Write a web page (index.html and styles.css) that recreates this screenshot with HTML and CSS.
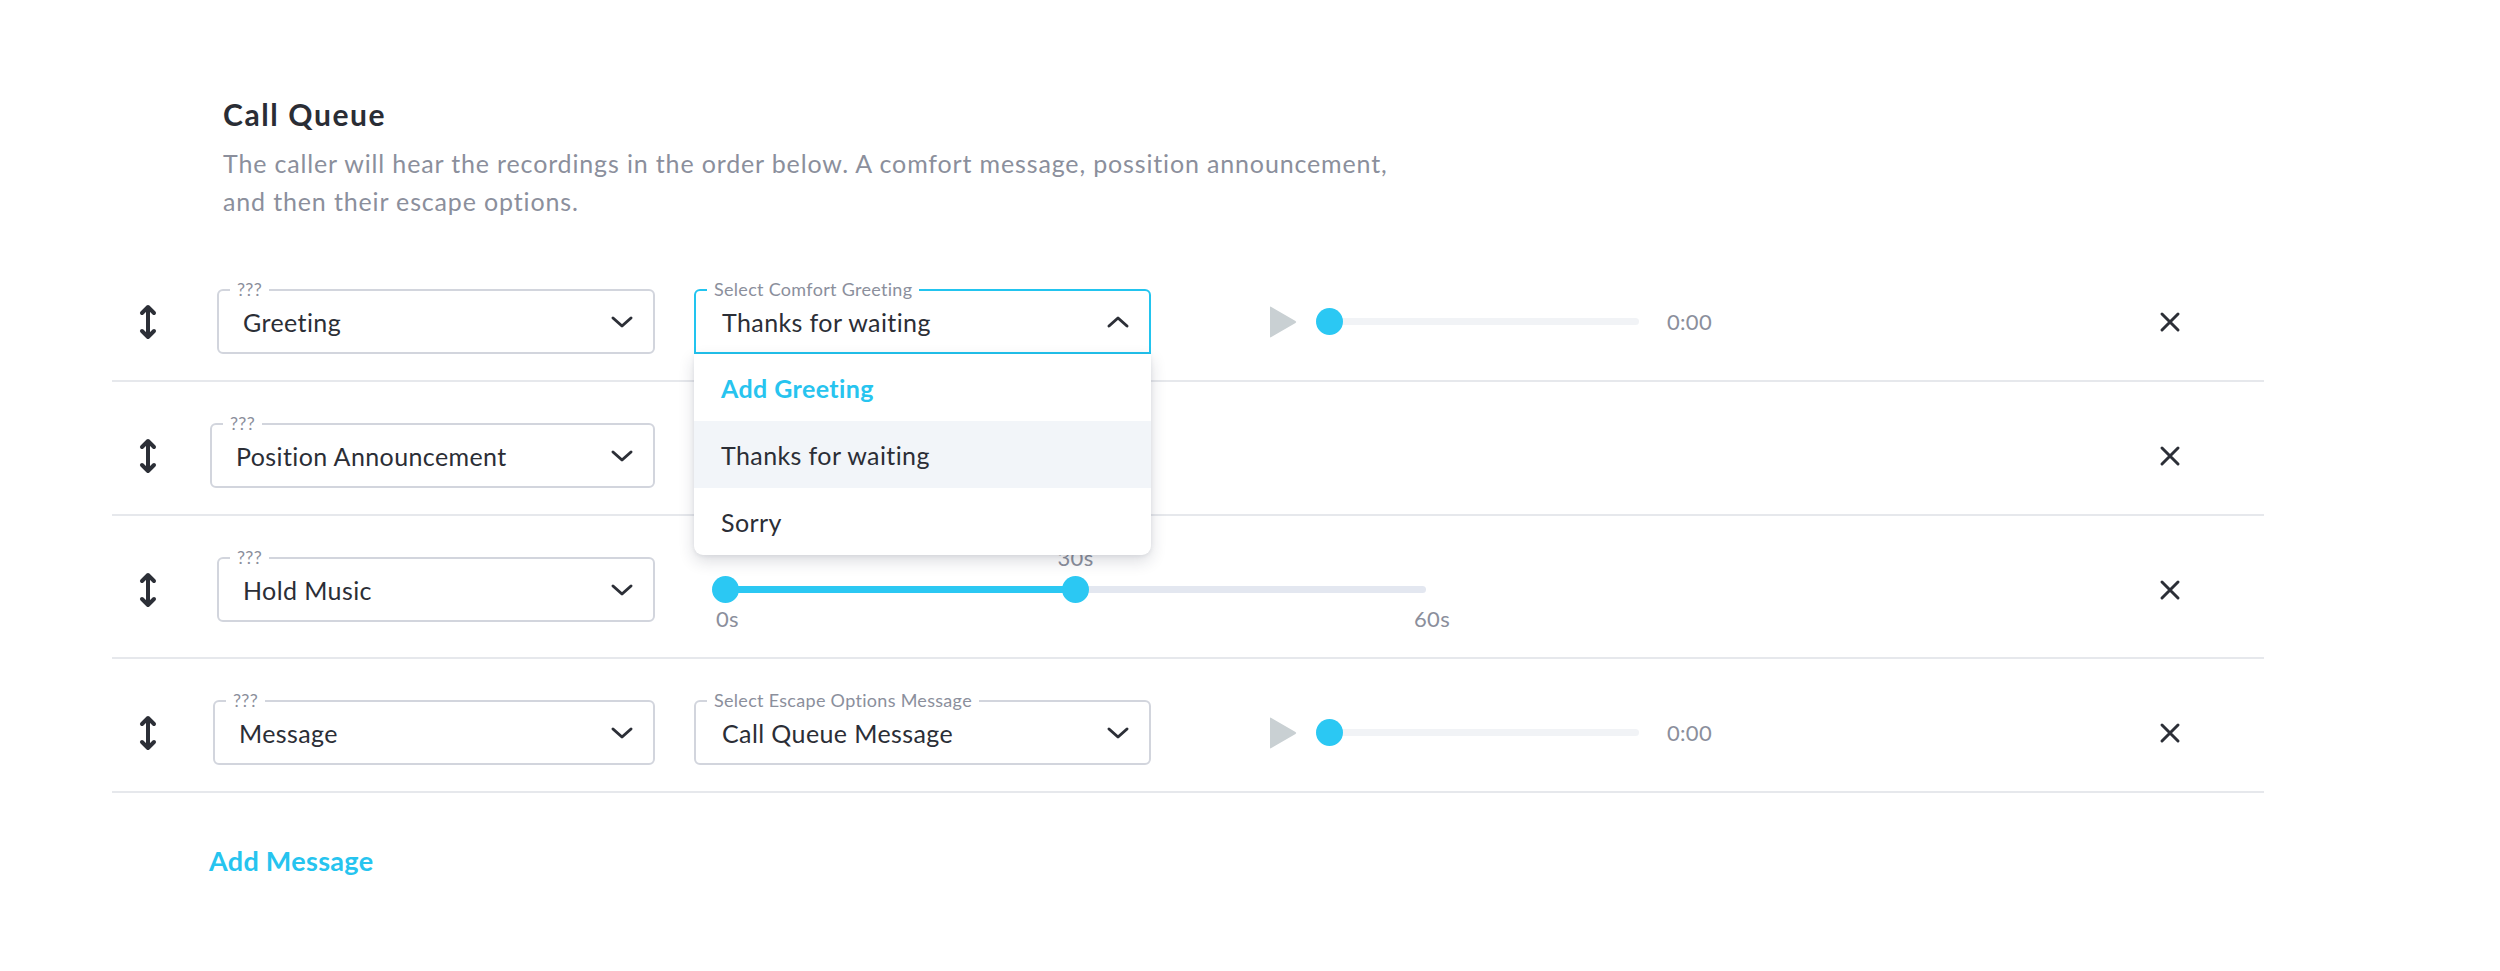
FILE: index.html
```html
<!DOCTYPE html>
<html lang="en">
<head>
<meta charset="utf-8">
<title>Call Queue</title>
<link rel="stylesheet" href="styles.css">
</head>
<body>
<div class="page">
  <header class="intro">
    <h1 class="title">Call Queue</h1>
    <p class="lede">The caller will hear the recordings in the order below. A comfort message, possition announcement, and then their escape options.</p>
  </header>

  <div class="queue">
    <!-- Row 1 -->
    <div class="row row--first">
      <div class="drag">
        <svg width="20" height="38" viewBox="0 0 20 38"><path d="M10 4 V34 M4 10 L10 4 L16 10 M4 28 L10 34 L16 28" fill="none" stroke="#2c2f37" stroke-width="4" stroke-linecap="round" stroke-linejoin="round"/></svg>
      </div>
      <div class="slot">
        <div class="select">
          <span class="select-label">???</span>
          <span class="select-value">Greeting</span>
          <svg class="chev" width="24" height="14" viewBox="0 0 24 14"><path d="M3 3 L12 11 L21 3" fill="none" stroke="#2c2f37" stroke-width="3" stroke-linecap="round" stroke-linejoin="round"/></svg>
        </div>
      </div>
      <div class="select select--msg select--open">
        <span class="select-label">Select Comfort Greeting</span>
        <span class="select-value">Thanks for waiting</span>
        <svg class="chev" width="24" height="14" viewBox="0 0 24 14"><path d="M3 11 L12 3 L21 11" fill="none" stroke="#2c2f37" stroke-width="3" stroke-linecap="round" stroke-linejoin="round"/></svg>
        <ul class="menu">
          <li class="menu-item menu-item--add">Add Greeting</li>
          <li class="menu-item menu-item--active">Thanks for waiting</li>
          <li class="menu-item">Sorry</li>
        </ul>
      </div>
      <div class="player">
        <svg class="play" width="28" height="32" viewBox="0 0 28 32"><path d="M1 1.5 Q1 0 2.3 0.9 L26.5 15 Q28 16 26.5 17 L2.3 31.1 Q1 32 1 30.5 Z" fill="#c9d0d3"/></svg>
        <div class="seek">
          <span class="seek-rail"></span>
          <span class="thumb"></span>
        </div>
        <span class="time">0:00</span>
      </div>
      <button class="remove" type="button" aria-label="Remove">
        <svg width="22" height="22" viewBox="0 0 22 22"><path d="M3 3 L19 19 M19 3 L3 19" stroke="#2c2f37" stroke-width="3" stroke-linecap="round"/></svg>
      </button>
    </div>

    <!-- Row 2 -->
    <div class="row">
      <div class="drag">
        <svg width="20" height="38" viewBox="0 0 20 38"><path d="M10 4 V34 M4 10 L10 4 L16 10 M4 28 L10 34 L16 28" fill="none" stroke="#2c2f37" stroke-width="4" stroke-linecap="round" stroke-linejoin="round"/></svg>
      </div>
      <div class="slot">
        <div class="select select--wide">
          <span class="select-label">???</span>
          <span class="select-value">Position Announcement</span>
          <svg class="chev" width="24" height="14" viewBox="0 0 24 14"><path d="M3 3 L12 11 L21 3" fill="none" stroke="#2c2f37" stroke-width="3" stroke-linecap="round" stroke-linejoin="round"/></svg>
        </div>
      </div>
      <button class="remove" type="button" aria-label="Remove">
        <svg width="22" height="22" viewBox="0 0 22 22"><path d="M3 3 L19 19 M19 3 L3 19" stroke="#2c2f37" stroke-width="3" stroke-linecap="round"/></svg>
      </button>
    </div>

    <!-- Row 3 -->
    <div class="row row--range">
      <div class="drag">
        <svg width="20" height="38" viewBox="0 0 20 38"><path d="M10 4 V34 M4 10 L10 4 L16 10 M4 28 L10 34 L16 28" fill="none" stroke="#2c2f37" stroke-width="4" stroke-linecap="round" stroke-linejoin="round"/></svg>
      </div>
      <div class="slot">
        <div class="select">
          <span class="select-label">???</span>
          <span class="select-value">Hold Music</span>
          <svg class="chev" width="24" height="14" viewBox="0 0 24 14"><path d="M3 3 L12 11 L21 3" fill="none" stroke="#2c2f37" stroke-width="3" stroke-linecap="round" stroke-linejoin="round"/></svg>
        </div>
      </div>
      <div class="range">
        <div class="range-bar">
          <span class="range-rail"></span>
          <span class="range-fill" style="width: 50%"></span>
          <span class="thumb range-thumb" style="left: 0%"></span>
          <span class="thumb range-thumb" style="left: 50%"></span>
          <span class="range-value" style="left: 50%">30s</span>
        </div>
        <div class="range-scale"><span>0s</span><span>60s</span></div>
      </div>
      <button class="remove" type="button" aria-label="Remove">
        <svg width="22" height="22" viewBox="0 0 22 22"><path d="M3 3 L19 19 M19 3 L3 19" stroke="#2c2f37" stroke-width="3" stroke-linecap="round"/></svg>
      </button>
    </div>

    <!-- Row 4 -->
    <div class="row">
      <div class="drag">
        <svg width="20" height="38" viewBox="0 0 20 38"><path d="M10 4 V34 M4 10 L10 4 L16 10 M4 28 L10 34 L16 28" fill="none" stroke="#2c2f37" stroke-width="4" stroke-linecap="round" stroke-linejoin="round"/></svg>
      </div>
      <div class="slot">
        <div class="select select--mid">
          <span class="select-label">???</span>
          <span class="select-value">Message</span>
          <svg class="chev" width="24" height="14" viewBox="0 0 24 14"><path d="M3 3 L12 11 L21 3" fill="none" stroke="#2c2f37" stroke-width="3" stroke-linecap="round" stroke-linejoin="round"/></svg>
        </div>
      </div>
      <div class="select select--msg">
        <span class="select-label">Select Escape Options Message</span>
        <span class="select-value">Call Queue Message</span>
        <svg class="chev" width="24" height="14" viewBox="0 0 24 14"><path d="M3 3 L12 11 L21 3" fill="none" stroke="#2c2f37" stroke-width="3" stroke-linecap="round" stroke-linejoin="round"/></svg>
      </div>
      <div class="player">
        <svg class="play" width="28" height="32" viewBox="0 0 28 32"><path d="M1 1.5 Q1 0 2.3 0.9 L26.5 15 Q28 16 26.5 17 L2.3 31.1 Q1 32 1 30.5 Z" fill="#c9d0d3"/></svg>
        <div class="seek">
          <span class="seek-rail"></span>
          <span class="thumb"></span>
        </div>
        <span class="time">0:00</span>
      </div>
      <button class="remove" type="button" aria-label="Remove">
        <svg width="22" height="22" viewBox="0 0 22 22"><path d="M3 3 L19 19 M19 3 L3 19" stroke="#2c2f37" stroke-width="3" stroke-linecap="round"/></svg>
      </button>
    </div>
  </div>

  <a class="add-link" href="#">Add Message</a>
</div>
</body>
</html>
```

FILE: styles.css
```css
* { box-sizing: border-box; }

html, body {
  margin: 0;
  padding: 0;
  background: #ffffff;
}

body {
  font-family: "Lato", "Liberation Sans", sans-serif;
  color: #2b2e36;
}

.page {
  padding-top: 96px;
}

.intro {
  padding-left: 223px;
}

.title {
  margin: 0;
  font-size: 30px;
  line-height: 36px;
  font-weight: 700;
  letter-spacing: 1.6px;
  color: #2a2d35;
}

.lede {
  margin: 12px 0 0;
  max-width: 1200px;
  font-size: 25px;
  line-height: 38px;
  letter-spacing: 0.85px;
  color: #8b8f9c;
}

.queue {
  margin: 27px 0 0 112px;
  width: 2152px;
}

.row {
  display: flex;
  align-items: flex-start;
  padding: 41px 0 26px;
  border-bottom: 2px solid #e6e8ec;
}

.row--first {
  padding-top: 42px;
}

.row--range {
  padding-bottom: 28px;
}

.drag {
  width: 72px;
  height: 65px;
  display: flex;
  align-items: center;
  justify-content: center;
}

.slot {
  width: 471px;
  display: flex;
  justify-content: flex-end;
}

.select {
  position: relative;
  display: flex;
  align-items: center;
  width: 438px;
  height: 65px;
  padding: 0 19px 0 24px;
  border: 2px solid #d2d5dd;
  border-radius: 6px;
  background: #fff;
}

.select--wide { width: 445px; }
.select--mid { width: 442px; }

.select--msg {
  width: 457px;
  margin-left: 39px;
  padding-left: 26px;
}

.select--open {
  border-color: #22c4ef;
  border-radius: 6px 6px 0 0;
}

.select-label {
  position: absolute;
  top: -12px;
  left: 11px;
  padding: 0 7px;
  background: #fff;
  font-size: 18px;
  line-height: 20px;
  letter-spacing: 0.3px;
  color: #8b8f9c;
  white-space: nowrap;
}

.select-value {
  flex: 1;
  font-size: 25px;
  line-height: 30px;
  letter-spacing: 0.4px;
  color: #2b2e36;
  white-space: nowrap;
}

.chev {
  flex: none;
  display: block;
}

.menu {
  position: absolute;
  top: calc(100% + 2px);
  left: -2px;
  right: -2px;
  margin: 0;
  padding: 0;
  list-style: none;
  background: #fff;
  border-radius: 0 0 9px 9px;
  box-shadow: 0 6px 16px rgba(30, 40, 60, 0.16), 0 1px 4px rgba(30, 40, 60, 0.08);
  z-index: 5;
  overflow: hidden;
}

.menu-item {
  display: flex;
  align-items: center;
  height: 67px;
  padding-left: 27px;
  font-size: 25px;
  letter-spacing: 0.4px;
  color: #2b2e36;
}

.menu-item--add {
  color: #27c4ef;
  font-weight: 700;
}

.menu-item--active {
  background: #f2f5f9;
}

.player {
  display: flex;
  align-items: center;
  height: 65px;
  margin-left: 118px;
}

.play {
  display: block;
  flex: none;
}

.seek {
  position: relative;
  width: 323px;
  height: 27px;
  margin-left: 19px;
}

.seek-rail {
  position: absolute;
  left: 0;
  right: 0;
  top: 10px;
  height: 7px;
  border-radius: 4px;
  background: #f1f3f6;
}

.thumb {
  position: absolute;
  top: 0;
  left: 0;
  width: 27px;
  height: 27px;
  border-radius: 50%;
  background: #2bc8f3;
}

.time {
  margin-left: 28px;
  font-size: 22px;
  letter-spacing: 0.3px;
  color: #8b8f9c;
}

.range {
  width: 734px;
  margin-left: 61px;
}

.range-bar {
  position: relative;
  height: 27px;
  margin: 19px 24px 0 9px;
}

.range-rail {
  position: absolute;
  left: 0;
  right: 0;
  top: 10px;
  height: 7px;
  border-radius: 4px;
  background: #e3e7f0;
}

.range-fill {
  position: absolute;
  left: 0;
  top: 10px;
  height: 7px;
  background: #2bc8f3;
}

.range-thumb {
  margin-left: -13.5px;
}

.range-value {
  position: absolute;
  top: -30px;
  transform: translateX(-50%);
  font-size: 22px;
  line-height: 24px;
  letter-spacing: 0.3px;
  color: #8b8f9c;
}

.range-scale {
  display: flex;
  justify-content: space-between;
  margin-top: 6px;
  font-size: 22px;
  line-height: 20px;
  letter-spacing: 0.3px;
  color: #8b8f9c;
}

.remove {
  margin-left: auto;
  margin-right: 83px;
  width: 22px;
  height: 65px;
  padding: 0;
  border: 0;
  background: none;
  display: flex;
  align-items: center;
  justify-content: center;
  cursor: pointer;
}

.remove svg { display: block; }

.add-link {
  display: inline-block;
  margin: 52px 0 0 209px;
  font-size: 27px;
  line-height: 32px;
  font-weight: 700;
  letter-spacing: 0.3px;
  color: #26c4ef;
  text-decoration: none;
}
```
